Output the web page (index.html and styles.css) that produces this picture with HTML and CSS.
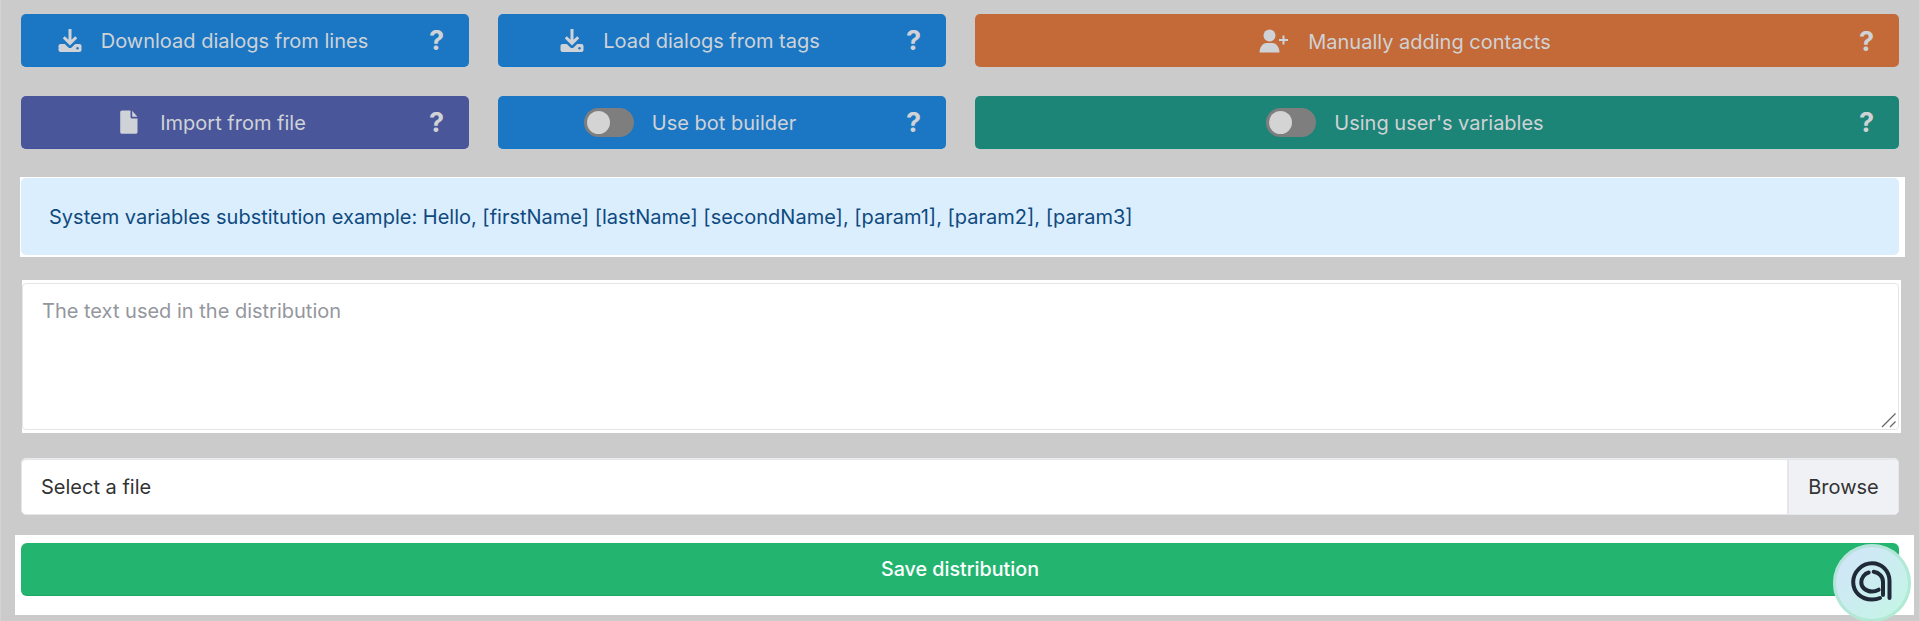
FILE: index.html
```html
<!DOCTYPE html>
<html lang="en">
<head>
<meta charset="utf-8">
<title>Distribution</title>
<link rel="stylesheet" href="styles.css">
</head>
<body>
<div class="page">
  <div class="dim-rows">
    <div class="row">
      <a class="btn blue narrow"><span class="btn-main"><svg class="ico" width="24" height="24" viewBox="0 0 24 24"><path class="line" d="M12 1v14M5.800 9.200L12 15.400l6.200-6.200"/><path class="fill" d="M2.500 16h4.300l3.600 3.400c.9.800 2.300.8 3.200 0l3.600-3.400h4.300c1.100 0 2 .9 2 2v4c0 1.100-.9 2-2 2h-19c-1.100 0-2-.9-2-2v-4c0-1.100.9-2 2-2z"/><circle class="hole" cx="19.500" cy="20.300" r="1.200"/></svg><span>Download dialogs from lines</span></span><span class="q">?</span></a>
      <a class="btn blue narrow"><span class="btn-main"><svg class="ico" width="24" height="24" viewBox="0 0 24 24"><path class="line" d="M12 1v14M5.800 9.200L12 15.400l6.200-6.200"/><path class="fill" d="M2.500 16h4.300l3.600 3.400c.9.800 2.300.8 3.200 0l3.600-3.400h4.300c1.100 0 2 .9 2 2v4c0 1.100-.9 2-2 2h-19c-1.100 0-2-.9-2-2v-4c0-1.100.9-2 2-2z"/><circle class="hole" cx="19.500" cy="20.300" r="1.200"/></svg><span>Load dialogs from tags</span></span><span class="q">?</span></a>
      <a class="btn orange wide"><span class="btn-main"><svg class="ico" width="30" height="24" viewBox="0 0 30 24"><circle class="fill" cx="10.500" cy="6.500" r="6"/><path class="fill" d="M.5 23.500c0-5 3-9.500 7-9.500h6c4 0 7 4.500 7 9.500z"/><path class="fill" d="M23.500 6.500h2v3.500H29v2h-3.500v3.500h-2V12H20v-2h3.500z"/></svg><span>Manually adding contacts</span></span><span class="q">?</span></a>
    </div>
    <div class="row">
      <a class="btn purple narrow"><span class="btn-main file-main"><svg class="ico" width="18" height="24" viewBox="0 0 18 24"><path class="fill" d="M2 .5h8.500v6.500c0 .8.700 1.500 1.500 1.500h5.500V22c0 1-.8 1.800-1.800 1.800H2C1 23.800.200 23 .200 22V2.300C.2 1.300 1 .5 2 .5z"/><path class="fill" d="M12.200.8l5.200 6H12.200z"/></svg><span>Import from file</span></span><span class="q">?</span></a>
      <a class="btn blue narrow"><span class="btn-main toggle-main"><span class="toggle"><span class="knob"></span></span><span>Use bot builder</span></span><span class="q">?</span></a>
      <a class="btn teal wide"><span class="btn-main toggle-main"><span class="toggle"><span class="knob"></span></span><span>Using user's variables</span></span><span class="q">?</span></a>
    </div>
  </div>
  <div class="lit alert-wrap"><div class="alert">System variables substitution example: Hello, [firstName] [lastName] [secondName], [param1], [param2], [param3]</div></div>
  <div class="lit area-wrap"><textarea class="area" placeholder="The text used in the distribution"></textarea><svg class="grip" width="16" height="16" viewBox="0 0 16 16"><path d="M1 15L14.500 1.500M9 15l5.500-5.500" stroke="#666" stroke-width="1.300" fill="none"/></svg></div>
  <div class="lit file-wrap"><span class="file-label">Select a file</span><span class="browse">Browse</span></div>
  <div class="lit save-wrap"><button class="save" type="button">Save distribution</button></div>
</div>
<div class="widget"><svg width="42" height="42" viewBox="0 0 42 42" fill="none"><path d="M38.500 37V20C38.500 10 31 2.200 21 2.200S2.200 11 2.200 21 10 38.500 21 38.500c3 0 5.500-.4 8-1.500" stroke="#1f2937" stroke-width="4" stroke-linecap="round"/><path d="M17.700 11.500C13.500 12.500 10.300 17 10.300 21.500 10.300 26.500 15 30.500 21 30.500c2.500 0 4.500-.6 6.700-1.800" stroke="#1f2937" stroke-width="4" stroke-linecap="round"/><path d="M22.700 10.700C28 11.500 32 15.500 32 21v13" stroke="#1f2937" stroke-width="4" stroke-linecap="round"/></svg></div>
</body>
</html>
```
FILE: styles.css
```css
* { box-sizing: border-box; }
html, body { margin: 0; height: 621px; overflow: hidden; }
body { background: #cbcbcb; box-shadow: inset 1px 0 0 #d3d3d3, inset -1px 0 0 #d3d3d3; font-family: Inter, "Liberation Sans", sans-serif; font-size: 20px; position: relative; }
.page { padding: 14px 21px 0 21px; display: flex; flex-direction: column; }
.dim-rows { display: flex; flex-direction: column; gap: 29px; }
.row { display: flex; gap: 29px; }
.btn { height: 53px; border-radius: 5px; color: #cfd2d6; display: flex; align-items: center; position: relative; font-weight: 400; line-height: 1; }
.btn-main span:last-child { padding-top: 2px; }
.narrow { width: 448px; }
.wide { flex: 1; width: 925px; }
.blue { background: #1b77c4; border-bottom: 1px solid #0f78cc; }
.purple { background: #4a569a; border-bottom: 1px solid #4450a0; }
.orange { background: #c46a38; }
.teal { background: #1d8577; border-bottom: 1px solid #0f8a78; }
.btn-main { flex: 1; display: flex; justify-content: center; align-items: center; gap: 19px; padding-right: 64px; }
.file-main { gap: 22px; }
.toggle-main { gap: 18px; }
.ico { flex: none; }
.fill { fill: #cfd2d6; }
.line { fill: none; stroke: #cfd2d6; stroke-width: 3; }
.hole { fill: #1b77c4; }
.q { position: absolute; right: 25px; top: 50%; transform: translateY(-50%); font-size: 27px; font-weight: 700; line-height: 1; }
.toggle { width: 50px; height: 29px; border-radius: 15px; background: #7e7e7e; padding: 3px; display: block; }
.knob { display: block; width: 23px; height: 23px; border-radius: 50%; background: #d4d4d4; }
.lit { background: #fff; }
.alert-wrap { margin: 28px -6px 0 -1px; padding: 1px 6px 2px 1px; height: 80px; }
.alert { height: 77px; background: #dbeefe; border-radius: 5px; color: #0f4a7f; padding: 0 28px; display: flex; align-items: center; }
.area-wrap { margin: 23px -2px 0 1px; padding: 3px 2px 3px 0; height: 153px; position: relative; }
.area { display: block; width: 100%; height: 147px; border: 1px solid #e4e6ea; border-radius: 4px; padding: 13px 19px; font: 20px/1.4 Inter, "Liberation Sans", sans-serif; color: #333; resize: none; outline: none; background: #fff; }
.area::placeholder { color: #94979d; opacity: 1; }
.grip { position: absolute; right: 4px; bottom: 5px; }
.file-wrap { margin-top: 26px; height: 56px; border: 1px solid #e4e6ea; border-radius: 5px; display: flex; align-items: center; color: #333; box-shadow: 0 -1px 0 #e9eaec; }
.file-label { flex: 1; padding-left: 19px; }
.browse { width: 111px; height: 100%; background: #f0f1f5; border-left: 2px solid #e4e6ea; display: flex; align-items: center; justify-content: center; border-radius: 0 5px 5px 0; }
.save-wrap { margin: 20px -15px 0 -6px; padding: 8px 15px 19px 6px; height: 80px; }
.save { width: 100%; height: 53px; background: #23b570; border: 0; border-bottom: 1px solid #1ea866; border-radius: 6px; color: #fff; font: 500 19.700px Inter, "Liberation Sans", sans-serif; }
.widget { position: absolute; left: 1833px; top: 544px; width: 78px; height: 78px; padding-bottom: 3px; border-radius: 50%; background: linear-gradient(135deg, #d3e3fc 0%, #c3f7e3 100%); box-shadow: inset 0 0 0 3px rgba(160, 225, 195, .55); display: flex; align-items: center; justify-content: center; }
```
